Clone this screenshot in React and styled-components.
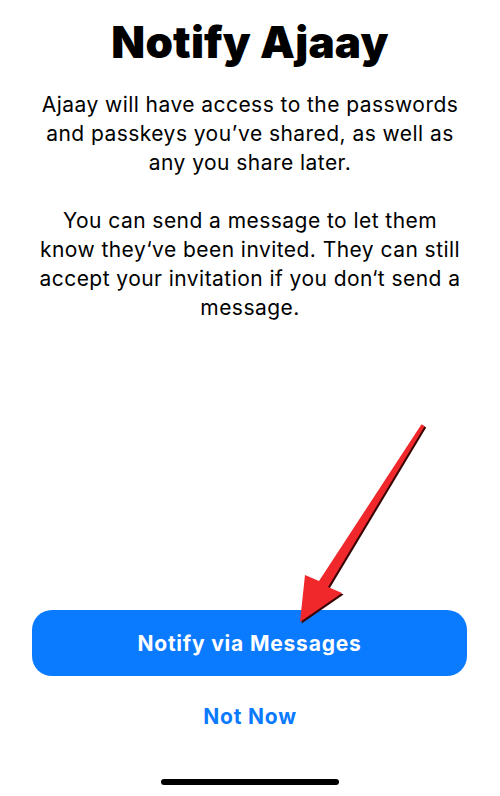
import React from "react";
import styled, { createGlobalStyle } from "styled-components";

const Global = createGlobalStyle`
  html, body { margin: 0; padding: 0; background: #ffffff; }
  body { font-family: Inter, "Noto Sans", "Liberation Sans", sans-serif; -webkit-font-smoothing: antialiased; }
`;

const Page = styled.div`
  position: relative;
  width: 500px;
  height: 796px;
  display: flex;
  flex-direction: column;
  align-items: center;
  background: #fff;
  overflow: hidden;
`;

const Title = styled.h1`
  margin: 16px 0 0;
  font-size: 44px;
  line-height: 53px;
  font-weight: 900;
  letter-spacing: 0.2px;
  color: #000;
  text-align: center;
`;

const Body = styled.div`
  margin-top: 21px;
  padding: 0 35px;
  display: flex;
  flex-direction: column;
  gap: 29px;
`;

const Paragraph = styled.p`
  margin: 0;
  font-size: 21px;
  line-height: 29px;
  font-weight: 400;
  letter-spacing: 0.45px;
  color: #000;
  text-align: center;
`;

const Spacer = styled.div`
  flex: 1;
`;

const Footer = styled.div`
  width: 100%;
  display: flex;
  flex-direction: column;
  align-items: center;
  padding-bottom: 11px;
`;

const PrimaryButton = styled.button`
  width: 435px;
  height: 66px;
  margin-left: -1px;
  border: none;
  border-radius: 20px;
  background: #0a7aff;
  color: #fff;
  font-family: inherit;
  font-size: 21px;
  font-weight: 700;
  letter-spacing: 0.8px;
  display: flex;
  align-items: center;
  justify-content: center;
`;

const LinkButton = styled.button`
  margin-top: 29px;
  height: 24px;
  border: none;
  background: transparent;
  padding: 0;
  color: #0a7aff;
  font-family: inherit;
  font-size: 21px;
  line-height: 24px;
  font-weight: 700;
  letter-spacing: 0.8px;
`;

const HomeIndicator = styled.div`
  margin-top: 50px;
  width: 178px;
  height: 6px;
  border-radius: 3px;
  background: #000;
`;

const ArrowOverlay = styled.svg`
  position: absolute;
  left: 0;
  top: 0;
  pointer-events: none;
`;

export default function App() {
  const arrow =
    "421.5,424.2 424.6,426.2 328,587 342,593 300,622 305,575 319,581";
  return (
    <>
      <Global />
      <Page>
        <Title>Notify Ajaay</Title>
        <Body>
          <Paragraph>
            Ajaay will have access to the passwords and passkeys you’ve shared,
            as well as any you share later.
          </Paragraph>
          <Paragraph>
            You can send a message to let them know they‘ve been invited. They
            can still accept your invitation if you don‘t send a message.
          </Paragraph>
        </Body>
        <Spacer />
        <Footer>
          <PrimaryButton>Notify via Messages</PrimaryButton>
          <LinkButton>Not Now</LinkButton>
          <HomeIndicator />
        </Footer>
        <ArrowOverlay width="500" height="796" viewBox="0 0 500 796">
          <polygon points={arrow} fill="#3a0505" transform="translate(1.6,1.4)" />
          <polygon points={arrow} fill="#f0282c" />
        </ArrowOverlay>
      </Page>
    </>
  );
}
